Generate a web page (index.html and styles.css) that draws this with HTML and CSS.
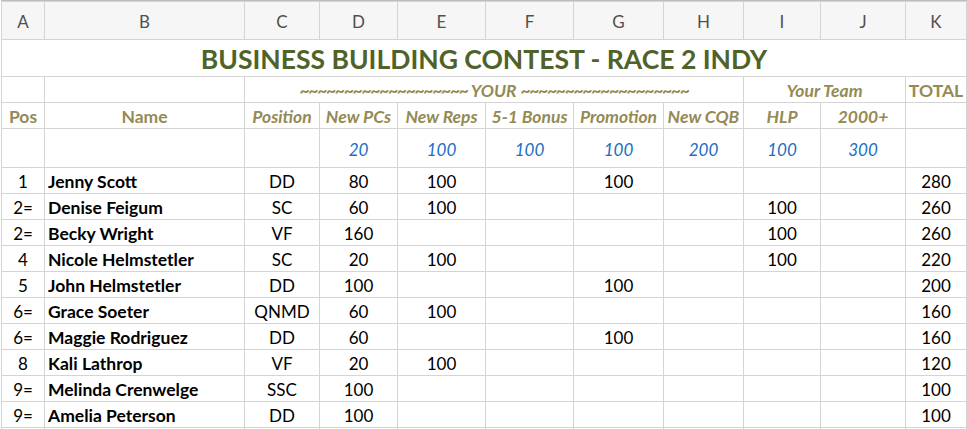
FILE: index.html
```html
<!DOCTYPE html>
<html>
<head>
<meta charset="utf-8">
<link rel="stylesheet" href="styles.css">
</head>
<body>
<div class="sheet">
  <div class="hd">A</div><div class="hd">B</div><div class="hd">C</div><div class="hd">D</div><div class="hd">E</div><div class="hd">F</div><div class="hd">G</div><div class="hd">H</div><div class="hd">I</div><div class="hd">J</div><div class="hd">K</div>

  <div class="c title span11">BUSINESS BUILDING CONTEST - RACE 2 INDY</div>

  <div class="c"></div><div class="c"></div>
  <div class="c tan it span6"><span class="tilde">~~~~~~~~~~~~~~~~~~~</span>&nbsp;YOUR&nbsp;<span class="tilde">~~~~~~~~~~~~~~~~~~~</span></div>
  <div class="c tan it span2">Your Team</div>
  <div class="c tan">TOTAL</div>

  <div class="c tan">Pos</div><div class="c tan">Name</div><div class="c tan it">Position</div><div class="c tan it">New PCs</div><div class="c tan it">New Reps</div><div class="c tan it">5-1 Bonus</div><div class="c tan it">Promotion</div><div class="c tan it">New CQB</div><div class="c tan it">HLP</div><div class="c tan it">2000+</div><div class="c"></div>

  <div class="c"></div><div class="c"></div><div class="c"></div><div class="c blue">20</div><div class="c blue">100</div><div class="c blue">100</div><div class="c blue">100</div><div class="c blue">200</div><div class="c blue">100</div><div class="c blue">300</div><div class="c"></div>

  <div class="c d">1</div><div class="c d name">Jenny Scott</div><div class="c d">DD</div><div class="c d">80</div><div class="c d">100</div><div class="c d"></div><div class="c d">100</div><div class="c d"></div><div class="c d"></div><div class="c d"></div><div class="c d">280</div>
  <div class="c d">2=</div><div class="c d name">Denise Feigum</div><div class="c d">SC</div><div class="c d">60</div><div class="c d">100</div><div class="c d"></div><div class="c d"></div><div class="c d"></div><div class="c d">100</div><div class="c d"></div><div class="c d">260</div>
  <div class="c d">2=</div><div class="c d name">Becky Wright</div><div class="c d">VF</div><div class="c d">160</div><div class="c d"></div><div class="c d"></div><div class="c d"></div><div class="c d"></div><div class="c d">100</div><div class="c d"></div><div class="c d">260</div>
  <div class="c d">4</div><div class="c d name">Nicole Helmstetler</div><div class="c d">SC</div><div class="c d">20</div><div class="c d">100</div><div class="c d"></div><div class="c d"></div><div class="c d"></div><div class="c d">100</div><div class="c d"></div><div class="c d">220</div>
  <div class="c d">5</div><div class="c d name">John Helmstetler</div><div class="c d">DD</div><div class="c d">100</div><div class="c d"></div><div class="c d"></div><div class="c d">100</div><div class="c d"></div><div class="c d"></div><div class="c d"></div><div class="c d">200</div>
  <div class="c d">6=</div><div class="c d name">Grace Soeter</div><div class="c d">QNMD</div><div class="c d">60</div><div class="c d">100</div><div class="c d"></div><div class="c d"></div><div class="c d"></div><div class="c d"></div><div class="c d"></div><div class="c d">160</div>
  <div class="c d">6=</div><div class="c d name">Maggie Rodriguez</div><div class="c d">DD</div><div class="c d">60</div><div class="c d"></div><div class="c d"></div><div class="c d">100</div><div class="c d"></div><div class="c d"></div><div class="c d"></div><div class="c d">160</div>
  <div class="c d">8</div><div class="c d name">Kali Lathrop</div><div class="c d">VF</div><div class="c d">20</div><div class="c d">100</div><div class="c d"></div><div class="c d"></div><div class="c d"></div><div class="c d"></div><div class="c d"></div><div class="c d">120</div>
  <div class="c d">9=</div><div class="c d name">Melinda Crenwelge</div><div class="c d">SSC</div><div class="c d">100</div><div class="c d"></div><div class="c d"></div><div class="c d"></div><div class="c d"></div><div class="c d"></div><div class="c d"></div><div class="c d">100</div>
  <div class="c d">9=</div><div class="c d name">Amelia Peterson</div><div class="c d">DD</div><div class="c d">100</div><div class="c d"></div><div class="c d"></div><div class="c d"></div><div class="c d"></div><div class="c d"></div><div class="c d"></div><div class="c d">100</div>
  <div class="c d"></div><div class="c d"></div><div class="c d"></div><div class="c d"></div><div class="c d"></div><div class="c d"></div><div class="c d"></div><div class="c d"></div><div class="c d"></div><div class="c d"></div><div class="c d"></div>
</div>
</body>
</html>
```
FILE: styles.css
```css
html, body {
  margin: 0;
  padding: 0;
  background: #ffffff;
  overflow: hidden;
}
body {
  font-family: Lato, "Liberation Sans", sans-serif;
  color: #000;
}
.sheet {
  display: grid;
  grid-template-columns: 42px 199px 74px 77px 87px 87px 89px 79px 76px 84px 60px;
  grid-template-rows: 37px 36px 25px 25px 38px repeat(11, 25px);
  gap: 1px;
  width: max-content;
  margin-left: 1px;
  padding: 1px;
  border-top: 1px solid #bdbdbd;
  background: #d4d4d4;
}
.hd {
  background: #f6f6f6;
  display: flex;
  align-items: center;
  justify-content: center;
  font-size: 17px;
  color: #505050;
  padding-top: 1px;
}
.c {
  background: #fff;
  display: flex;
  align-items: center;
  justify-content: center;
  white-space: nowrap;
  overflow: hidden;
  font-size: 17px;
}
.span11 { grid-column: span 11; }
.span6 { grid-column: span 6; }
.span2 { grid-column: span 2; }
.title {
  font-size: 26.5px;
  font-weight: 700;
  color: #4f6228;
  padding-top: 2px;
}
.tan {
  color: #948a54;
  font-weight: 700;
  font-size: 17.5px;
  padding-top: 1px;
}
.it { font-style: italic; }
.tilde {
  letter-spacing: -1.3px;
}
.blue {
  color: #1b6ec2;
  font-style: italic;
  padding-top: 2px;
}
.d { padding-top: 1px; }
.name {
  justify-content: flex-start;
  padding-left: 3px;
  font-weight: 700;
  font-size: 17.5px;
}
```
